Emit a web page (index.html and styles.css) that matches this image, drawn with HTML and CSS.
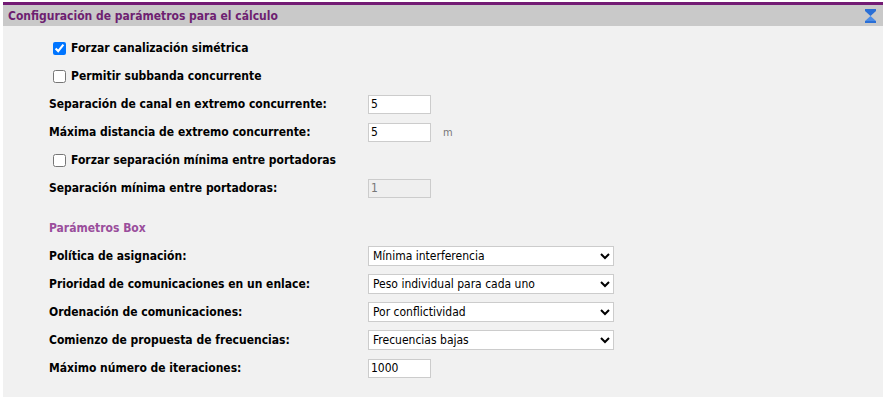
FILE: index.html
```html
<!DOCTYPE html>
<html>
<head>
  <link rel="stylesheet" href="styles.css">
</head>
<body>
  <div class="panel">
    <div class="panel-head">
      <span class="panel-title">Configuración de parámetros para el cálculo</span>
      <svg class="collapse" width="11" height="14" viewBox="0 0 11 14">
        <rect x="0" y="0" width="11" height="2" fill="#2a6fd6"/>
        <polygon points="0,2 11,2 5.5,7" fill="#2a6fd6"/>
        <polygon points="5.5,7 11,12 0,12" fill="#4a8be6"/>
        <rect x="0" y="12" width="11" height="2" fill="#2a6fd6"/>
      </svg>
    </div>
    <div class="panel-body">
      <div class="row check">
        <input type="checkbox" id="c1" checked>
        <label for="c1">Forzar canalización simétrica</label>
      </div>
      <div class="row check">
        <input type="checkbox" id="c2">
        <label for="c2">Permitir subbanda concurrente</label>
      </div>
      <div class="row">
        <label class="lbl">Separación de canal en extremo concurrente:</label>
        <input class="num" type="text" value="5">
      </div>
      <div class="row">
        <label class="lbl">Máxima distancia de extremo concurrente:</label>
        <input class="num" type="text" value="5">
        <span class="unit">m</span>
      </div>
      <div class="row check">
        <input type="checkbox" id="c3">
        <label for="c3">Forzar separación mínima entre portadoras</label>
      </div>
      <div class="row">
        <label class="lbl">Separación mínima entre portadoras:</label>
        <input class="num" type="text" value="1" disabled>
      </div>

      <div class="section">Parámetros Box</div>

      <div class="row">
        <label class="lbl">Política de asignación:</label>
        <select class="sel"><option>Mínima interferencia</option></select>
      </div>
      <div class="row">
        <label class="lbl">Prioridad de comunicaciones en un enlace:</label>
        <select class="sel"><option>Peso individual para cada uno</option></select>
      </div>
      <div class="row">
        <label class="lbl">Ordenación de comunicaciones:</label>
        <select class="sel"><option>Por conflictividad</option></select>
      </div>
      <div class="row">
        <label class="lbl">Comienzo de propuesta de frecuencias:</label>
        <select class="sel"><option>Frecuencias bajas</option></select>
      </div>
      <div class="row">
        <label class="lbl">Máximo número de iteraciones:</label>
        <input class="num" type="text" value="1000">
      </div>
    </div>
  </div>
</body>
</html>
```

FILE: styles.css
```css
body {
  margin: 0;
  background: #fff;
  font-family: "DejaVu Sans Condensed", "DejaVu Sans", sans-serif;
  font-size: 12px;
  color: #000;
}

.panel {
  margin: 2px 4px 0 3px;
}

.panel-head {
  border-top: 3px solid #731b74;
  background: #c9c9c9;
  height: 21px;
  display: flex;
  align-items: center;
  justify-content: space-between;
  padding: 0 7px 0 5px;
}

.panel-title {
  color: #6e1f71;
  font-weight: bold;
  font-size: 12px;
}

.collapse {
  display: block;
}

.panel-body {
  background: #f1f1f1;
  padding: 8px 0 20px 46px;
  min-height: 349px;
}

.row {
  display: flex;
  align-items: center;
  height: 28px;
}

.row label {
  font-weight: bold;
}

.check input {
  width: 13px;
  height: 13px;
  margin: 0 2px 0 4px;
}

.check label {
  padding-left: 3px;
}

.lbl {
  width: 319px;
}

.num {
  width: 63px;
  height: 19px;
  box-sizing: border-box;
  border: 1px solid #ccc;
  background: #fff;
  padding: 0 2px;
  font-family: inherit;
  font-size: 12px;
  color: #000;
  outline: none;
}

.num:disabled {
  background: #efefef;
  color: #777;
  border-color: #ccc;
}

.unit {
  color: #777;
  font-size: 11px;
  margin-left: 12px;
}

.section {
  margin-top: 12px;
  height: 28px;
  display: flex;
  align-items: center;
  color: #9a4e9c;
  font-weight: bold;
}

.sel {
  width: 246px;
  height: 20px;
  box-sizing: border-box;
  border: 1px solid #ccc;
  border-radius: 0;
  background: #fff;
  font-family: inherit;
  font-size: 12px;
  color: #000;
  padding: 0;
}
```
